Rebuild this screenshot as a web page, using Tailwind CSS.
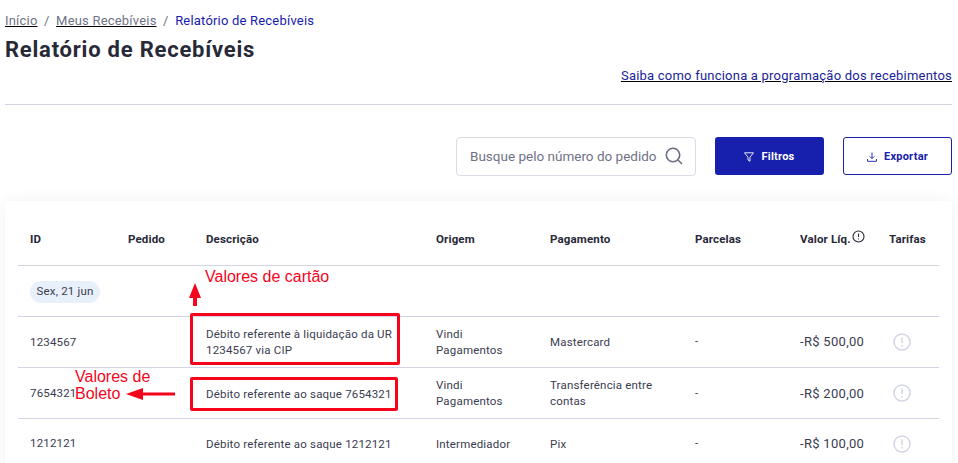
<!DOCTYPE html>
<html lang="pt-BR">
<head>
    <meta charset="UTF-8">
    <meta name="viewport" content="width=device-width, initial-scale=1.0">
    <title>Relatório de Recebíveis</title>
    <script src="https://cdn.jsdelivr.net/npm/@tailwindcss/browser@4"></script>
</head>
<body class="relative h-[463px] overflow-hidden bg-white font-['Roboto',sans-serif] text-[#2b2d42]">
    <div class="pl-[5px] pr-[6px]">
        <nav class="flex items-center pt-[12px] h-[29px] text-[13px] tracking-[0.2px] text-[#6f7285]">
            <a class="underline decoration-black">Início</a>
            <span class="mx-[6.5px]">/</span>
            <a class="underline decoration-black">Meus Recebíveis</a>
            <span class="mx-[6.5px]">/</span>
            <span class="text-[#1720ad]">Relatório de Recebíveis</span>
        </nav>
        <h1 class="mt-[7px] text-[22px] leading-[28px] font-bold tracking-[0.77px] text-[#272838]">Relatório de Recebíveis</h1>
        <div class="flex justify-end mt-[4px] h-[16px]">
            <a class="text-[13px] leading-[16px] tracking-[0.22px] text-[#1a2399] underline decoration-black">Saiba como funciona a programação dos recebimentos</a>
        </div>
        <div class="mt-[20px] h-px bg-[#d3d5e6]"></div>
        <div class="flex justify-end items-center mt-[31px] h-[40px]">
            <div class="flex items-center w-[240px] h-[39px] pl-[13px] border border-[#d8dae6] rounded-[4px] text-[13.5px] text-[#6f7285]">
                <span>Busque pelo número do pedido</span>
                <svg class="ml-[8px]" width="18" height="18" viewBox="0 0 18 18" fill="none" stroke="#6b6e80" stroke-width="1.6"><circle cx="8" cy="8" r="6.7"/><path d="M13 13l4 4"/></svg>
            </div>
            <button class="flex items-center justify-center ml-[19px] w-[109px] h-[38px] pt-[2px] bg-[#1720ad] rounded-[3px] text-white text-[11px] font-bold tracking-[0.25px]">
                <svg class="mr-[7px]" width="10" height="10" viewBox="0 0 10 10" fill="none" stroke="white" stroke-width="0.9"><path d="M0.5 0.8h9L6 5.2v4L4 8V5.2z"/></svg>
                Filtros
            </button>
            <button class="flex items-center justify-center ml-[19px] w-[109px] h-[38px] pt-[2px] bg-white border border-[#1720ad] rounded-[3px] text-[#1720ad] text-[11px] font-bold tracking-[0.25px]">
                <svg class="mr-[7px]" width="10" height="10" viewBox="0 0 10 10" fill="none" stroke="#1720ad" stroke-width="0.9"><path d="M5 0.5v6M2.8 4.4L5 6.6l2.2-2.2M0.5 7v2.3h9V7"/></svg>
                Exportar
            </button>
        </div>
    </div>
    <div class="mt-[25px] ml-[5px] mr-[6px] h-[300px] bg-white rounded-[4px] px-[13px] pt-[13px] shadow-[0_0_16px_rgba(30,40,120,0.06)]">
        <table class="w-[921px] table-fixed border-collapse text-[11.5px] tracking-[0.18px] text-[#3a3c50]">
            <colgroup>
                <col class="w-[98px]"><col class="w-[78px]"><col class="w-[230px]"><col class="w-[114px]"><col class="w-[145px]"><col class="w-[105px]"><col class="w-[89px]"><col class="w-[62px]">
            </colgroup>
            <thead>
                <tr class="h-[51px] border-b border-[#d3d5e6] text-left text-[#272838] tracking-[0.15px]">
                    <th class="pl-[12px] font-bold">ID</th>
                    <th class="pl-[12px] font-bold">Pedido</th>
                    <th class="pl-[12px] font-bold">Descrição</th>
                    <th class="pl-[12px] font-bold">Origem</th>
                    <th class="pl-[12px] font-bold">Pagamento</th>
                    <th class="pl-[12px] font-bold">Parcelas</th>
                    <th class="pl-[12px] font-bold">
                        <span class="inline-flex items-start">Valor Líq.<svg class="ml-[1px] -mt-[1px]" width="13" height="13" viewBox="0 0 13 13" fill="none" stroke="#272838" stroke-width="1.1"><circle cx="6.5" cy="6.5" r="5.5"/><path d="M6.5 3.5v3.6M6.5 8.5v1"/></svg></span>
                    </th>
                    <th class="pl-[12px] font-bold">Tarifas</th>
                </tr>
            </thead>
            <tbody>
                <tr class="h-[51px] border-b border-[#d3d5e6]">
                    <td class="pl-[12px] pt-[2px]" colspan="8"><span class="inline-flex items-center h-[22px] px-[6.5px] rounded-full bg-[#e7f0fb] text-[#3a3c50]">Sex, 21 jun</span></td>
                </tr>
                <tr class="h-[51px] border-b border-[#d3d5e6]">
                    <td class="pl-[12px] pt-[2px]">1234567</td>
                    <td class="pl-[12px]"></td>
                    <td class="pl-[12px] leading-[16px]">Débito referente à liquidação da UR 1234567 via CIP</td>
                    <td class="pl-[12px] pr-[12px] leading-[16px]">Vindi Pagamentos</td>
                    <td class="pl-[12px] leading-[16px]">Mastercard</td>
                    <td class="pl-[12px]">-</td>
                    <td class="pl-[12px] text-[13px] tracking-[0.3px]">-R$ 500,00</td>
                    <td class="pl-[16px]"><svg width="18" height="18" viewBox="0 0 18 18" fill="none" stroke="#d3d5e6" stroke-width="1.5"><circle cx="9" cy="9" r="8"/><path d="M9 4.5v5.5M9 12v1.5"/></svg></td>
                </tr>
                <tr class="h-[51px] border-b border-[#d3d5e6]">
                    <td class="pl-[12px] pt-[2px]">7654321</td>
                    <td class="pl-[12px]"></td>
                    <td class="pl-[12px] pt-[2px] leading-[16px]">Débito referente ao saque 7654321</td>
                    <td class="pl-[12px] pr-[12px] leading-[16px]">Vindi Pagamentos</td>
                    <td class="pl-[12px] leading-[16px]">Transferência entre contas</td>
                    <td class="pl-[12px] pt-[2px]">-</td>
                    <td class="pl-[12px] pt-[2px] text-[13px] tracking-[0.3px]">-R$ 200,00</td>
                    <td class="pl-[16px]"><svg width="18" height="18" viewBox="0 0 18 18" fill="none" stroke="#d3d5e6" stroke-width="1.5"><circle cx="9" cy="9" r="8"/><path d="M9 4.5v5.5M9 12v1.5"/></svg></td>
                </tr>
                <tr class="h-[51px]">
                    <td class="pl-[12px]">1212121</td>
                    <td class="pl-[12px]"></td>
                    <td class="pl-[12px] leading-[16px]">Débito referente ao saque 1212121</td>
                    <td class="pl-[12px] leading-[16px]">Intermediador</td>
                    <td class="pl-[12px] leading-[16px]">Pix</td>
                    <td class="pl-[12px]">-</td>
                    <td class="pl-[12px] text-[13px] tracking-[0.3px]">-R$ 100,00</td>
                    <td class="pl-[16px]"><svg width="18" height="18" viewBox="0 0 18 18" fill="none" stroke="#d3d5e6" stroke-width="1.5"><circle cx="9" cy="9" r="8"/><path d="M9 4.5v5.5M9 12v1.5"/></svg></td>
                </tr>
            </tbody>
        </table>
    </div>

    <!-- red annotations drawn over the screenshot -->
    <div class="absolute left-[190px] top-[313px] w-[210px] h-[52px] border-[3px] border-[#f5041c] rounded-[2px]"></div>
    <div class="absolute left-[190px] top-[377px] w-[208px] h-[34px] border-[3px] border-[#f5041c] rounded-[2px]"></div>
    <div class="absolute left-[205px] top-[268px] font-['Liberation_Sans',sans-serif] text-[16px] leading-[18px] text-[#f5041c]">Valores de cartão</div>
    <div class="absolute left-[75px] top-[368px] font-['Liberation_Sans',sans-serif] text-[16px] leading-[17px] text-[#f5041c]">Valores de<br>Boleto</div>
    <svg class="absolute left-[188px] top-[283px]" width="14" height="24" viewBox="0 0 14 24" fill="#f5041c"><path d="M7 0l6 15H9v8H5v-8H1z"/></svg>
    <svg class="absolute left-[126px] top-[387px]" width="49" height="14" viewBox="0 0 49 14" fill="#f5041c"><path d="M0 7l17-6v4.5h32v3H17V13z"/></svg>
</body>
</html>
